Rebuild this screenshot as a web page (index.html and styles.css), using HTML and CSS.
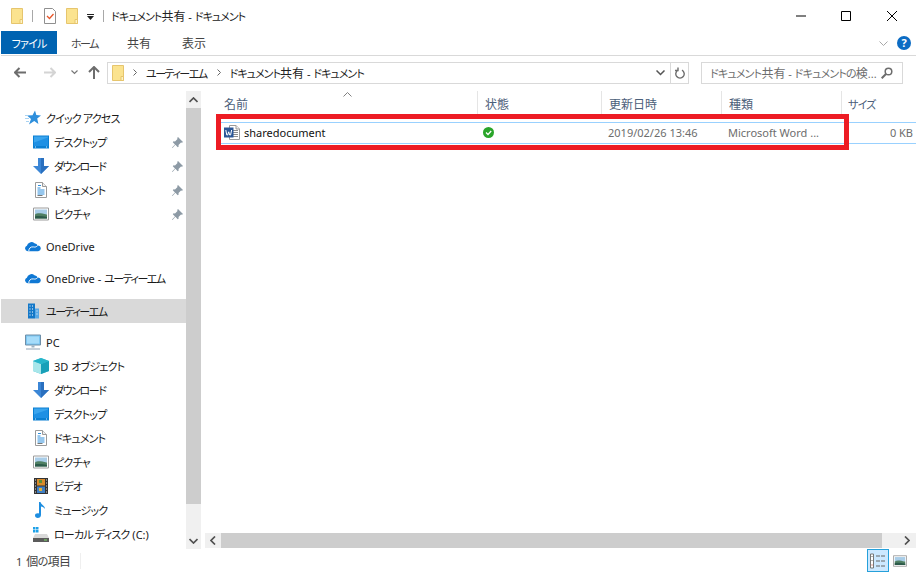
FILE: index.html
```html
<!DOCTYPE html>
<html lang="ja">
<head>
<meta charset="utf-8">
<title>ドキュメント共有 - ドキュメント</title>
<link rel="stylesheet" href="styles.css">
</head>
<body>
<svg class="defs" width="0" height="0">
  <symbol id="folder" viewBox="0 0 12 16"><path d="M.5.5h11v15H.5z" fill="#fbe38f" stroke="#e6c56d"/><path d="M9 11.500h2.500v4H9z" fill="#fff3c4" stroke="#e6c56d"/></symbol>
  <symbol id="desktop" viewBox="0 0 16 13"><path d="M0 0h16v13H0z" fill="#0a7fd2"/><path d="M1 1h14v9.500H1z" fill="#3aa5ee"/><path d="M1 7l14-5v8.500H1z" fill="#1e90e4"/><path d="M2 11.500h1M13 11.500h1" stroke="#cfeaff"/></symbol>
  <symbol id="down" viewBox="0 0 16 16"><path d="M5 0h6v8h5l-8 8-8-8h5z" fill="#3b86d6"/><path d="M8 0h3v8h5l-8 8z" fill="#2a70bf"/></symbol>
  <symbol id="doc" viewBox="0 0 12 16"><path d="M.5.5h7l4 4v11H.5z" fill="#fff" stroke="#9a9a9a"/><path d="M7.500.5v4h4" fill="#eee" stroke="#9a9a9a"/><path d="M3 3.500h3M2.500 6h3M2.500 8h7M2.500 10h7M2.500 12h7" stroke="#2f8fdc"/><path d="M2.500 13.500h5" stroke="#777"/></symbol>
  <symbol id="pic" viewBox="0 0 16 13"><path d="M.5.5h15v12H.5z" fill="#fff" stroke="#9c9c9c"/><path d="M2 2h12v5H2z" fill="#a9cde8"/><path d="M2 7c3-2 6-1 12 0v4H2z" fill="#4f7f63"/><path d="M2 9c4-1 8 0 12 .5V11H2z" fill="#2c5a4a"/></symbol>
  <symbol id="cloud" viewBox="0 0 17 11"><path d="M3 11a3 3 0 0 1-1-5.800A5 5 0 0 1 10 2.500 4 4 0 0 1 13.500 5 3 3 0 0 1 14 11z" fill="#0f78d4"/><path d="M4 11c0-3 2-5 5-4.500 2 .4 3 0 4.500-1.500" fill="none" stroke="#fff"/></symbol>
  <symbol id="building" viewBox="-3 -.5 16 16"><path d="M0 0h7v15H0z" fill="#1478c8"/><path d="M7 5h4v10H7z" fill="#5aa9e6"/><path d="M1.500 2h1v1h-1zM4 2h1v1H4zM1.500 5h1v1h-1zM4 5h1v1H4zM1.500 8h1v1h-1zM4 8h1v1H4zM1.500 11h1v1h-1zM4 11h1v1H4zM8.500 7h1v1h-1zM8.500 10h1v1h-1z" fill="#fff"/></symbol>
  <symbol id="pc" viewBox="0 0 16 15"><path d="M.5.500h15v10H.5z" fill="#7cc6f2" stroke="#6f8fa8"/><path d="M2 2h12v7H2z" fill="#a6dcfa"/><path d="M6.500 11h3v2h-3z" fill="#9fb2c2"/><path d="M1 14h14v1H1z" fill="#8ea3b5"/></symbol>
  <symbol id="cube" viewBox="0 0 16 16"><path d="M8 0l8 3v10l-8 3-8-3V3z" fill="#3fc4d4"/><path d="M8 6l8-3v10l-8 3z" fill="#19a0b8"/><path d="M0 3l8 3v10l-8-3z" fill="#a8e6ea"/><path d="M8 0l8 3-8 3-8-3z" fill="#28b5ca"/></symbol>
  <symbol id="film" viewBox="0 0 14 16"><path d="M0 0h14v16H0z" fill="#333"/><path d="M3 1h8v6.500H3z" fill="#d98b2b"/><path d="M3 8.500h8V15H3z" fill="#3f7fc4"/><path d="M5 2h3v3H5z" fill="#5c8f3a"/><path d="M5 10h3v3H5z" fill="#e0b03c"/><path d="M1 2h1M1 5h1M1 8h1M1 11h1M1 14h1M12 2h1M12 5h1M12 8h1M12 11h1M12 14h1" stroke="#ddd"/></symbol>
  <symbol id="music" viewBox="0 0 12 16"><path d="M4 0h1.500c.5 3 4.500 3.500 4.500 7-1-1.500-2.500-2.500-4-2.500V13c0 2-1.500 3-3.200 3S0 15 0 13.500 1.500 11 4 11.500z" fill="#1e8ee0"/></symbol>
  <symbol id="drive" viewBox="0 0 16 16"><path d="M0 1h2.500v2.500H0zM3 1h2.500v2.500H3zM0 4h2.500v2.500H0zM3 4h2.500v2.500H3z" fill="#1ea1e8"/><path d="M2 8h12l2 4H0z" fill="#d9d9d9"/><path d="M0 12h16v4H0z" fill="#5b5b5b"/><path d="M11 13.500h3v1h-3z" fill="#7fe06a"/></symbol>
  <symbol id="star" viewBox="0 0 16 15"><path d="M10 0l1.300 4.500L16 5l-3.800 3 1.200 5.500-4.200-3-5.200 3.500 2-5.500L2 5l5.500-.3z" fill="#2e8fdc"/><path d="M0 5h3M0 8h4M1 11h3" stroke="#a9d3f2"/></symbol>
  <symbol id="pin" viewBox="0 0 11 11"><path d="M6 0l5 5-1 .8-1-.3L6.500 8l.2 1.500-1 .7-2.300-2.500L.5 11 0 10.500l3-3L.8 5.200l.8-1L3 4.500 5.500 2l-.3-1z" fill="#8d9aa5"/></symbol>
  <symbol id="word" viewBox="0 0 16 15"><path d="M5.500.5h6.500l3.500 3.500v10.500h-10z" fill="#fff" stroke="#9a9a9a"/><path d="M12 .5V4h3.500" fill="#eee" stroke="#9a9a9a"/><path d="M8.500 5.500h5.500M8.500 7.500h5.500M8.500 9.500h5.500M8.500 11.500h5.500" stroke="#8c8c8c"/><path d="M0 2.500h9.500v10H0z" fill="#2b5797"/><path d="M1.800 5l1 5h.9l1-3.200 1 3.200h.9l1-5" fill="none" stroke="#fff"/></symbol>
  <symbol id="arrow" viewBox="0 0 12 11"><path d="M5.500 1L1 5.500 5.500 10M1.500 5.500H12" fill="none" stroke="currentColor" stroke-width="2"/></symbol>
  <symbol id="search" viewBox="0 0 12 12"><circle cx="7.500" cy="4.500" r="3.300" fill="none" stroke="#6d6d6d" stroke-width="1.500"/><path d="M5 7l-4.300 4.300" stroke="#6d6d6d" stroke-width="2"/></symbol>
</svg>

<div class="window">
  <header class="titlebar">
    <svg class="qat-folder"><use href="#folder"/></svg>
    <span class="qat-sep"></span>
    <svg class="qat-check" viewBox="0 0 12 16"><path d="M.5.5h8l3 3v12H.5z" fill="#fff" stroke="#8f8f8f"/><path d="M3 8l2.500 2.500L9.500 6" fill="none" stroke="#e8562a" stroke-width="1.300"/></svg>
    <svg class="qat-folder2"><use href="#folder"/></svg>
    <svg class="qat-drop" viewBox="0 0 7 6"><path d="M0 0h7v1H0zM0 2h7L3.500 6z" fill="#222"/></svg>
    <span class="qat-sep second"></span>
    <span class="title"><span class="k tight">ドキュメント</span><span class="h">共有</span> - <span class="k tight">ドキュメント</span></span>
    <div class="controls">
      <svg class="ctl" viewBox="0 0 46 30"><path d="M19 15h10" stroke="#000"/></svg>
      <svg class="ctl" viewBox="0 0 46 30"><path d="M18.500 10.500h9v9h-9z" fill="none" stroke="#000"/></svg>
      <svg class="ctl" viewBox="0 0 46 30"><path d="M18 10l10 10M28 10L18 20" stroke="#000" fill="none"/></svg>
    </div>
  </header>

  <nav class="ribbon">
    <span class="tab file k">ファイル</span>
    <span class="tab home u">ホーム</span>
    <span class="tab share h">共有</span>
    <span class="tab view h">表示</span>
    <svg class="rib-chev" viewBox="0 0 9 5"><path d="M.5.500l4 4 4-4" fill="none" stroke="#a8a8a8"/></svg>
    <span class="help">?</span>
  </nav>

  <div class="addressrow">
    <svg class="nav-back"><use href="#arrow"/></svg>
    <svg class="nav-fwd"><use href="#arrow"/></svg>
    <svg class="nav-hist" viewBox="0 0 7 5"><path d="M.5.500l3 3 3-3" fill="none" stroke="#777" stroke-width="1.200"/></svg>
    <svg class="nav-up" viewBox="0 0 12 13"><path d="M1 6l5-5 5 5M6 1.500V13" fill="none" stroke="#6d6d6d" stroke-width="2"/></svg>
    <div class="address">
      <svg class="addr-folder"><use href="#folder"/></svg>
      <svg class="crumb-sep" viewBox="0 0 4 7"><path d="M.5.500l3 3-3 3" fill="none" stroke="#666"/></svg>
      <span class="crumb u">ユーティーエム</span>
      <svg class="crumb-sep" viewBox="0 0 4 7"><path d="M.5.500l3 3-3 3" fill="none" stroke="#666"/></svg>
      <span class="crumb"><span class="k tight">ドキュメント</span><span class="h">共有</span> - <span class="k tight">ドキュメント</span></span>
      <svg class="addr-chev" viewBox="0 0 9 6"><path d="M.5.500l4 4 4-4" fill="none" stroke="#555" stroke-width="1.500"/></svg>
      <span class="addr-refresh"><svg viewBox="0 0 10 12"><path d="M3 3.200a4.200 4.200 0 1 0 4 0M3 .5v3H0" fill="none" stroke="#6d6d6d" stroke-width="1.400"/></svg></span>
    </div>
    <div class="searchbox">
      <span class="search-text"><span class="k">ドキュメント</span><span class="h">共有</span> - <span class="k">ドキュメントの</span><span class="h">検</span>...</span>
      <svg class="search-icon"><use href="#search"/></svg>
    </div>
  </div>

  <main class="main">
    <aside class="sidebar">
      <div class="navpane">
        <ul class="group">
          <li class="item top"><svg class="ic"><use href="#star"/></svg><span class="k">クイック アクセス</span></li>
          <li class="item"><svg class="ic"><use href="#desktop"/></svg><span class="k">デスクトップ</span><svg class="pin"><use href="#pin"/></svg></li>
          <li class="item"><svg class="ic"><use href="#down"/></svg><span class="dl">ダウンロード</span><svg class="pin"><use href="#pin"/></svg></li>
          <li class="item"><svg class="ic"><use href="#doc"/></svg><span class="k">ドキュメント</span><svg class="pin"><use href="#pin"/></svg></li>
          <li class="item"><svg class="ic"><use href="#pic"/></svg><span class="k">ピクチャ</span><svg class="pin"><use href="#pin"/></svg></li>
        </ul>
        <ul class="group"><li class="item top"><svg class="ic"><use href="#cloud"/></svg><span>OneDrive</span></li></ul>
        <ul class="group"><li class="item top"><svg class="ic"><use href="#cloud"/></svg><span>OneDrive - <span class="u">ユーティーエム</span></span></li></ul>
        <ul class="group sel"><li class="item top selected"><svg class="ic"><use href="#building"/></svg><span class="u">ユーティーエム</span></li></ul>
        <ul class="group">
          <li class="item top"><svg class="ic"><use href="#pc"/></svg><span>PC</span></li>
          <li class="item"><svg class="ic"><use href="#cube"/></svg><span>3D <span class="k">オブジェクト</span></span></li>
          <li class="item"><svg class="ic"><use href="#down"/></svg><span class="dl">ダウンロード</span></li>
          <li class="item"><svg class="ic"><use href="#desktop"/></svg><span class="k">デスクトップ</span></li>
          <li class="item"><svg class="ic"><use href="#doc"/></svg><span class="k">ドキュメント</span></li>
          <li class="item"><svg class="ic"><use href="#pic"/></svg><span class="k">ピクチャ</span></li>
          <li class="item"><svg class="ic"><use href="#film"/></svg><span class="k">ビデオ</span></li>
          <li class="item"><svg class="ic"><use href="#music"/></svg><span class="k">ミュージック</span></li>
          <li class="item"><svg class="ic"><use href="#drive"/></svg><span><span class="k">ローカル ディスク</span> (C:)</span></li>
        </ul>
      </div>
      <div class="vscroll">
        <span class="vbtn"><svg viewBox="0 0 9 6"><path d="M.5 5l4-4 4 4" fill="none" stroke="#505050" stroke-width="1.700"/></svg></span>
        <span class="vthumb"></span>
        <span class="vtrack"></span>
        <span class="vbtn"><svg viewBox="0 0 9 6"><path d="M.5 1l4 4 4-4" fill="none" stroke="#505050" stroke-width="1.700"/></svg></span>
      </div>
    </aside>

    <section class="content">
      <div class="colhead">
        <span class="col name h">名前<svg class="sort" viewBox="0 0 9 5"><path d="M.5 4.500l4-4 4 4" fill="none" stroke="#808080"/></svg></span>
        <span class="col h">状態</span>
        <span class="col h">更新日時</span>
        <span class="col h">種類</span>
        <span class="col size-head k">サイズ</span>
      </div>
      <div class="list">
        <div class="row">
          <span class="cell filename"><svg class="wordic"><use href="#word"/></svg>sharedocument</span>
          <span class="cell status"><svg class="okic" viewBox="0 0 11 11"><circle cx="5.500" cy="5.500" r="5.500" fill="#2aa52a"/><path d="M3 5.500l2 2 3.200-3.500" fill="none" stroke="#fff" stroke-width="1.300"/></svg></span>
          <span class="cell dim">2019/02/26 13:46</span>
          <span class="cell dim">Microsoft Word ...</span>
          <span class="cell dim size">0 KB</span>
        </div>
      </div>
      <div class="hscroll">
        <span class="hbtn"><svg viewBox="0 0 6 9"><path d="M5 .5l-4 4 4 4" fill="none" stroke="#505050" stroke-width="1.700"/></svg></span>
        <span class="hthumb"></span>
        <span class="hbtn end"><svg viewBox="0 0 6 9"><path d="M1 .5l4 4-4 4" fill="none" stroke="#505050" stroke-width="1.700"/></svg></span>
      </div>
      <div class="highlight"></div>
    </section>
  </main>

  <footer class="statusbar">
    <span class="count">1 <span class="h">個</span><span class="k">の</span><span class="h">項目</span></span>
    <span class="status-sep"></span>
    <span class="viewbtn active"><svg viewBox="0 0 16 16"><path d="M.5 1h3v14h-3z" fill="#fff" stroke="#777"/><path d="M1.500 3h1v1h-1zM1.500 7h1v1h-1z" fill="#666"/><path d="M1.500 11.500h1v1h-1z" fill="#c0392b"/><path d="M6 3h4M11 3h4M6 8h4M11 8h4M6 13h4M11 13h4" stroke="#666" stroke-width="1.200"/></svg></span>
    <svg class="viewbtn-pic"><use href="#pic"/></svg>
  </footer>
</div>
</body>
</html>
```

FILE: styles.css
```css
* { box-sizing: border-box; }
html, body { margin: 0; padding: 0; background: #fff; }
body {
  font-family: "Noto Sans", "Noto Sans CJK JP", sans-serif;
  font-size: 11px;
  color: #1a1a1a;
  font-feature-settings: "palt";
  overflow: hidden;
  white-space: nowrap;
}
.k { letter-spacing: -.8px; }
.k.tight { letter-spacing: -.95px; }
.u { letter-spacing: -1.5px; }
.dl { letter-spacing: -1.4px; }
.h { font-size: 12px; }
ul { list-style: none; margin: 0; padding: 0; }
svg { display: block; flex: none; }
.defs { position: absolute; }
.window { width: 916px; height: 573px; display: flex; flex-direction: column; overflow: hidden; }

.titlebar { height: 31px; display: flex; align-items: center; flex: none; padding-left: 11px; }
.qat-folder { width: 12px; height: 16px; }
.qat-sep { width: 1px; height: 12px; background: #a8a8a8; margin-left: 9px; }
.qat-check { width: 12px; height: 16px; margin-left: 11px; }
.qat-folder2 { width: 12px; height: 16px; margin-left: 10px; }
.qat-drop { width: 7px; height: 6px; margin-left: 9px; margin-top: 3px; }
.qat-sep.second { margin-left: 9px; }
.title { margin-left: 7px; color: #222; }
.controls { margin-left: auto; margin-right: 1px; display: flex; }
.ctl { width: 46px; height: 30px; }

.ribbon { height: 25px; flex: none; display: flex; align-items: flex-start; border-bottom: 1px solid #d9d9d9; margin-left: 1px; }
.tab { height: 23px; display: flex; align-items: center; color: #444; }
.tab.file { width: 56px; justify-content: center; background: #0063b1; color: #fff; }
.tab.home { margin-left: 14px; }
.tab.share { margin-left: 29px; }
.tab.view { margin-left: 31px; }
.rib-chev { width: 9px; height: 5px; margin-left: auto; margin-top: 10px; }
.help { width: 14px; height: 14px; border-radius: 50%; background: #0c6cc4; color: #fff; font-weight: 700; font-size: 11px; line-height: 14px; text-align: center; margin: 5px 5px 0 9px; }

.addressrow { height: 35px; flex: none; display: flex; align-items: center; padding: 0 0 2px 14px; }
.nav-back { width: 12px; height: 11px; color: #6d6d6d; }
.nav-fwd { width: 12px; height: 11px; color: #d4d4d4; margin-left: 18px; transform: scaleX(-1); }
.nav-hist { width: 7px; height: 5px; margin-left: 15px; }
.nav-up { width: 12px; height: 13px; margin-left: 10px; }
.address { width: 582px; height: 22px; margin-left: 7px; border: 1px solid #d9d9d9; display: flex; align-items: center; padding-left: 4px; }
.addr-folder { width: 12px; height: 16px; }
.crumb-sep { width: 4px; height: 7px; margin-left: 9px; }
.crumb { margin-left: 9px; color: #222; }
.crumb + .crumb-sep { margin-left: 10px; }
.addr-chev { width: 9px; height: 6px; margin-left: auto; margin-right: 5px; }
.addr-refresh { width: 18px; height: 20px; border-left: 1px solid #d9d9d9; display: flex; align-items: center; justify-content: center; }
.addr-refresh svg { width: 10px; height: 12px; }
.searchbox { width: 202px; height: 22px; margin-left: 12px; border: 1px solid #d9d9d9; display: flex; align-items: center; padding: 0 9px 0 8px; color: #6d6d6d; justify-content: space-between; }
.search-icon { width: 12px; height: 12px; }

.main { height: 458px; flex: none; display: flex; }
.sidebar { width: 205px; flex: none; display: flex; }
.navpane { width: 186px; padding: 7px 0 0 1px; }
.group { margin-top: 8px; }
.group.sel { margin-top: 9px; margin-bottom: -1px; }
.item { height: 24px; display: flex; align-items: center; padding-left: 32px; color: #1a1a1a; }
.item.top { padding-left: 24px; }
.item.selected { background: #d9d9d9; }
.ic { width: 16px; height: 16px; margin-right: 5px; }
.pin { width: 11px; height: 11px; margin-left: auto; margin-right: 3px; }
.vscroll { width: 15px; background: #f0f0f0; display: flex; flex-direction: column; }
.vbtn { height: 17px; display: flex; align-items: center; justify-content: center; flex: none; }
.vbtn svg { width: 9px; height: 6px; }
.vthumb { height: 396px; background: #cdcdcd; flex: none; }
.vtrack { flex: 1; }

.content { flex: 1; display: flex; flex-direction: column; position: relative; min-width: 0; }
.colhead { height: 26px; flex: none; display: grid; grid-template-columns: 272px 124px 120px 120px 1fr; color: #4c607a; }
.col { display: flex; align-items: center; padding-left: 7px; border-left: 1px solid #e5e5e5; position: relative; padding-bottom: 1px; }
.col.name { border-left: 0; padding-left: 19px; }
.col.size-head { padding-left: 6px; }
.sort { position: absolute; left: 138px; top: 1px; width: 9px; height: 5px; }
.list { flex: 1; padding: 5px 0 0 16px; }
.row { height: 22px; display: grid; grid-template-columns: 256px 124px 120px 120px 1fr; border-top: 1px solid #99d1ff; border-bottom: 1px solid #99d1ff; }
.cell { display: flex; align-items: center; padding-left: 7px; padding-bottom: 1px; }
.filename { padding-left: 3px; color: #111; }
.wordic { width: 16px; height: 15px; margin-right: 4px; }
.status { padding-left: 6px; }
.okic { width: 11px; height: 11px; }
.dim { color: #6d6d6d; }
.size { justify-content: flex-end; padding-right: 3px; }
.hscroll { height: 15px; flex: none; margin-bottom: 1px; background: #f0f0f0; display: flex; }
.hbtn { width: 16px; display: flex; align-items: center; justify-content: center; flex: none; }
.hbtn.end { width: 34px; justify-content: flex-end; padding-right: 6px; }
.hbtn svg { width: 6px; height: 9px; }
.hthumb { flex: 1; background: #cdcdcd; }
.highlight { position: absolute; left: 11px; top: 23px; width: 633px; height: 36px; border: 5px solid #ed1c24; }

.statusbar { height: 24px; flex: none; display: flex; align-items: center; padding-left: 16px; color: #444; }
.count { width: 64px; word-spacing: 1px; }
.count .h { letter-spacing: -.5px; }
.status-sep { width: 1px; height: 16px; background: #efefef; }
.viewbtn { width: 22px; height: 23px; margin-left: auto; display: flex; align-items: center; justify-content: center; border: 1px solid #26a0da; background: #cce8ff; margin-bottom: 1px; }
.viewbtn svg { width: 16px; height: 16px; }
.viewbtn-pic { width: 14px; height: 12px; margin: 0 9px 0 4px; }
```
